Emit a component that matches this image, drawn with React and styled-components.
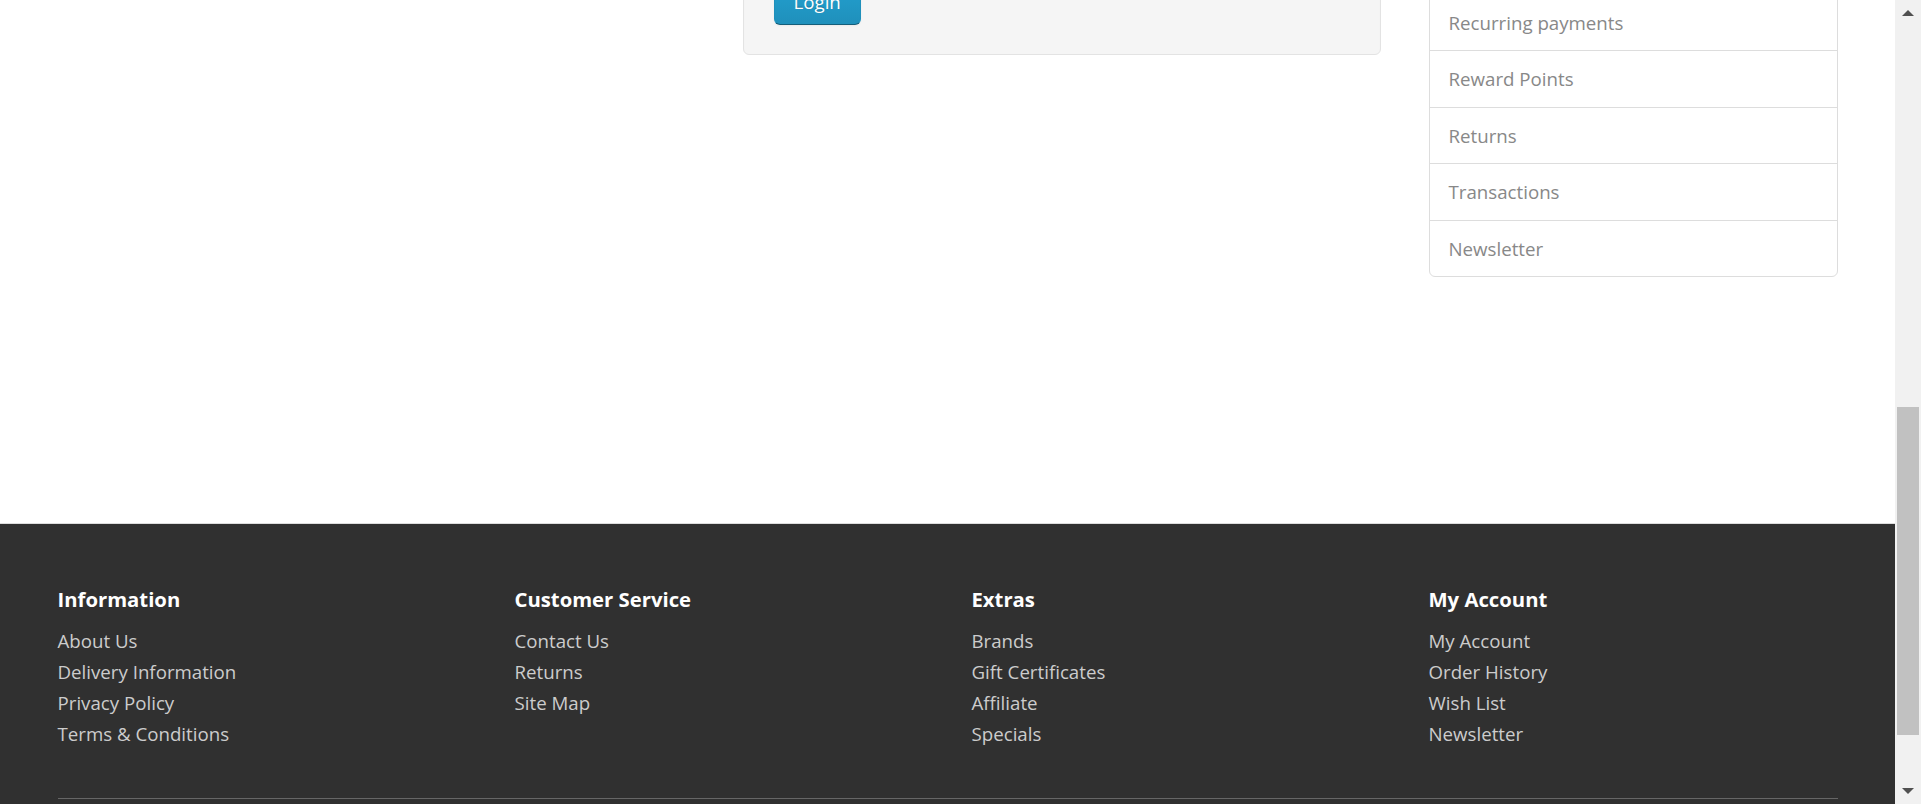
import React from "react";
import styled, { createGlobalStyle } from "styled-components";

const GlobalStyle = createGlobalStyle`
  * {
    box-sizing: border-box;
  }
  html,
  body {
    margin: 0;
    padding: 0;
    overflow: hidden;
  }
  body {
    font-family: "Open Sans", "Liberation Sans", sans-serif;
    font-size: 18.7px;
    line-height: 31px;
    color: #666;
    background: #fff;
  }
`;

const Page = styled.div`
  display: flex;
  width: 1921px;
  height: 804px;
`;

const Main = styled.div`
  flex: 1;
  display: flex;
  flex-direction: column;
  height: 804px;
  overflow: hidden;
`;

const TopSection = styled.div`
  height: 523px;
  flex-shrink: 0;
`;

const Container = styled.div`
  width: 1780px;
  margin: 0 auto;
`;

const Row = styled.div`
  display: grid;
  grid-template-columns: 1fr 409px;
  column-gap: 48px;
  align-items: start;
`;

const ContentRow = styled.div`
  display: grid;
  grid-template-columns: 1fr 1fr;
  column-gap: 48px;
  align-items: start;
`;

const Well = styled.div`
  grid-column: 2;
  margin-top: -51px;
  padding: 29.5px;
  background: #f5f5f5;
  border: 1px solid #e3e3e3;
  border-radius: 6px;
  box-shadow: inset 0 1px 1px rgba(0, 0, 0, 0.05);
`;

const PrimaryButton = styled.button`
  display: inline-block;
  padding: 6px 19px 8px;
  font-family: inherit;
  font-size: 18.7px;
  line-height: 29px;
  color: #fff;
  text-shadow: 0 -1px 0 rgba(0, 0, 0, 0.25);
  background: linear-gradient(to bottom, #23a1d1, #1f90bb);
  border: 1px solid;
  border-color: #1f90bb #1f90bb #145e7a;
  border-radius: 6px;
  box-shadow: inset 0 1px 0 rgba(255, 255, 255, 0.2),
    0 1px 2px rgba(0, 0, 0, 0.05);
  cursor: pointer;
`;

const ListGroup = styled.div`
  margin-top: -6.5px;
`;

const ListItem = styled.a`
  display: block;
  padding: 12px 19px 12.6px;
  margin-bottom: -1px;
  border: 1px solid #ddd;
  color: #888;
  text-decoration: none;

  &:last-child {
    border-bottom-left-radius: 6px;
    border-bottom-right-radius: 6px;
  }
`;

const Footer = styled.footer`
  flex: 1;
  padding-top: 64px;
  background: #303030;
  border-top: 1px solid #ddd;
  color: #e2e2e2;
`;

const FooterGrid = styled.div`
  display: grid;
  grid-template-columns: repeat(4, 1fr);
  column-gap: 48px;
`;

const FooterTitle = styled.h5`
  margin: 0 0 16px;
  font-size: 20.3px;
  font-weight: 700;
  line-height: 22px;
  color: #fff;
`;

const LinkList = styled.ul`
  list-style: none;
  margin: 0;
  padding: 0;
  line-height: 30.85px;
`;

const FooterLink = styled.a`
  color: #ccc;
  text-decoration: none;
`;

const Divider = styled.hr`
  margin: 48.3px 0 0;
  border: 0;
  border-bottom: 1px solid #666;
`;

const Scrollbar = styled.div`
  width: 26px;
  height: 804px;
  display: flex;
  flex-direction: column;
  background: #f1f1f1;
`;

const ArrowButton = styled.div`
  height: 26px;
  display: flex;
  align-items: center;
  justify-content: center;
  flex-shrink: 0;
`;

const Triangle = styled.span`
  width: 0;
  height: 0;
  border-left: 6px solid transparent;
  border-right: 6px solid transparent;
  ${(props) =>
    props.down
      ? "border-top: 6px solid #505050;"
      : "border-bottom: 6px solid #505050;"}
`;

const Thumb = styled.div`
  width: 22px;
  height: 328px;
  margin: 381px auto 0;
  background: #c1c1c1;
`;

const Track = styled.div`
  flex: 1;
`;

const accountLinks = [
  "Recurring payments",
  "Reward Points",
  "Returns",
  "Transactions",
  "Newsletter",
];

const footerColumns = [
  {
    title: "Information",
    links: ["About Us", "Delivery Information", "Privacy Policy", "Terms & Conditions"],
  },
  {
    title: "Customer Service",
    links: ["Contact Us", "Returns", "Site Map"],
  },
  {
    title: "Extras",
    links: ["Brands", "Gift Certificates", "Affiliate", "Specials"],
  },
  {
    title: "My Account",
    links: ["My Account", "Order History", "Wish List", "Newsletter"],
  },
];

const App = () => {
  return (
    <>
      <GlobalStyle />
      <Page>
        <Main>
          <TopSection>
            <Container>
              <Row>
                <ContentRow>
                  <Well>
                    <PrimaryButton>Login</PrimaryButton>
                  </Well>
                </ContentRow>
                <ListGroup>
                  {accountLinks.map((item) => (
                    <ListItem key={item} href="#">
                      {item}
                    </ListItem>
                  ))}
                </ListGroup>
              </Row>
            </Container>
          </TopSection>
          <Footer>
            <Container>
              <FooterGrid>
                {footerColumns.map((col) => (
                  <div key={col.title}>
                    <FooterTitle>{col.title}</FooterTitle>
                    <LinkList>
                      {col.links.map((link) => (
                        <li key={link}>
                          <FooterLink href="#">{link}</FooterLink>
                        </li>
                      ))}
                    </LinkList>
                  </div>
                ))}
              </FooterGrid>
              <Divider />
            </Container>
          </Footer>
        </Main>
        <Scrollbar>
          <ArrowButton>
            <Triangle />
          </ArrowButton>
          <Track>
            <Thumb />
          </Track>
          <ArrowButton>
            <Triangle down />
          </ArrowButton>
        </Scrollbar>
      </Page>
    </>
  );
};

export default App;
